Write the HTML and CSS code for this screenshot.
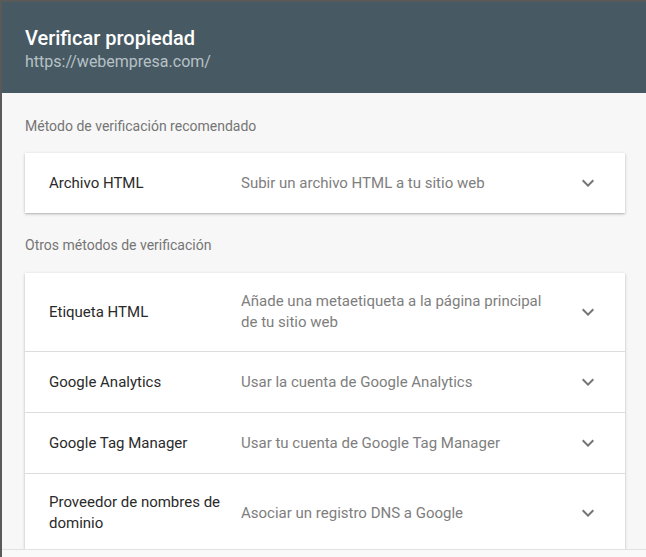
FILE: index.html
```html
<!DOCTYPE html>
<html lang="es">
<head>
<meta charset="utf-8">
<title>Verificar propiedad</title>
<link rel="stylesheet" href="styles.css">
</head>
<body>
<div class="dialog">
  <header class="head">
    <h1 class="title">Verificar propiedad</h1>
    <div class="url">https://webempresa.com/</div>
  </header>
  <main class="content">
    <div class="label first">Método de verificación recomendado</div>
    <div class="card">
      <div class="row">
        <div class="name">Archivo HTML</div>
        <div class="desc">Subir un archivo HTML a tu sitio web</div>
        <svg class="chev" viewBox="0 0 24 24"><path d="M16.59 8.59L12 13.17 7.41 8.59 6 10l6 6 6-6z"/></svg>
      </div>
    </div>
    <div class="label">Otros métodos de verificación</div>
    <div class="card">
      <div class="row">
        <div class="name">Etiqueta HTML</div>
        <div class="desc">Añade una metaetiqueta a la página principal de tu sitio web</div>
        <svg class="chev" viewBox="0 0 24 24"><path d="M16.59 8.59L12 13.17 7.41 8.59 6 10l6 6 6-6z"/></svg>
      </div>
      <div class="row">
        <div class="name">Google Analytics</div>
        <div class="desc">Usar la cuenta de Google Analytics</div>
        <svg class="chev" viewBox="0 0 24 24"><path d="M16.59 8.59L12 13.17 7.41 8.59 6 10l6 6 6-6z"/></svg>
      </div>
      <div class="row">
        <div class="name">Google Tag Manager</div>
        <div class="desc">Usar tu cuenta de Google Tag Manager</div>
        <svg class="chev" viewBox="0 0 24 24"><path d="M16.59 8.59L12 13.17 7.41 8.59 6 10l6 6 6-6z"/></svg>
      </div>
      <div class="row">
        <div class="name">Proveedor de nombres de dominio</div>
        <div class="desc">Asociar un registro DNS a Google</div>
        <svg class="chev" viewBox="0 0 24 24"><path d="M16.59 8.59L12 13.17 7.41 8.59 6 10l6 6 6-6z"/></svg>
      </div>
    </div>
  </main>
  <footer class="foot"></footer>
</div>
</body>
</html>
```
FILE: styles.css
```css
html, body {
  margin: 0;
  padding: 0;
  height: 100%;
  background: #5a5a5a;
  font-family: Roboto, "Noto Sans", Arial, sans-serif;
}
.dialog {
  height: 555px;
  margin-top: 2px;
  margin-left: 2px;
  display: flex;
  flex-direction: column;
  background: #f7f7f7;
  overflow: hidden;
}
.head {
  background: #475a63;
  height: 91px;
  box-sizing: border-box;
  padding: 23px 25px 0 23px;
  flex: none;
}
.title {
  margin: 0;
  font-size: 20px;
  font-weight: 500;
  line-height: 26px;
  color: #ffffff;
}
.url {
  font-size: 16px;
  line-height: 22px;
  color: #b7c1c6;
}
.content {
  height: 456px;
  flex: none;
  overflow: hidden;
  padding: 0 21px 0 23px;
}
.label {
  font-size: 14px;
  line-height: 20px;
  color: #757575;
  margin: 22px 0 18px;
}
.label.first {
  margin-top: 23px;
  margin-bottom: 17px;
}
.card {
  background: #fff;
  box-shadow: 0 1px 3px rgba(0,0,0,0.22), 0 1px 1px rgba(0,0,0,0.08);
}
.row {
  display: flex;
  align-items: center;
  min-height: 59px;
  box-sizing: border-box;
  padding: 18px 25px 18px 24px;
  border-top: 1px solid #dcdcdc;
}
.row:first-child {
  border-top: none;
  min-height: 60px;
}
.name {
  flex: none;
  width: 176px;
  margin-right: 16px;
  font-size: 15px;
  line-height: 21px;
  color: #2a2a2a;
}
.desc {
  flex: 1;
  font-size: 15px;
  line-height: 21px;
  color: #7e7e7e;
  margin-right: 21px;
}
.chev {
  flex: none;
  width: 24px;
  height: 24px;
  fill: #757575;
}
.foot {
  flex: 1;
  background: #f9f9f9;
  border-top: 1px solid #e2e2e2;
}
```
